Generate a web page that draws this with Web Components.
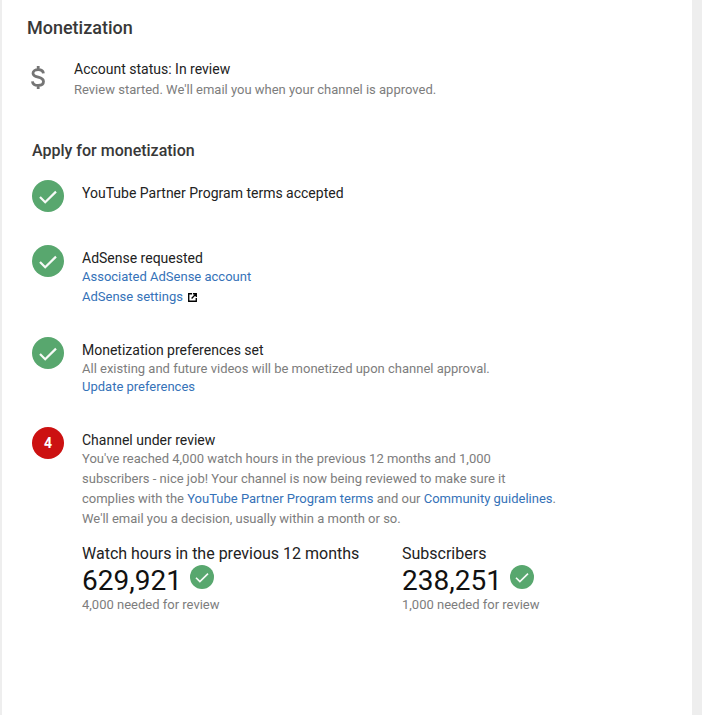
<!DOCTYPE html>
<html>
<head>
<meta charset="utf-8">
<style>
    html, body { margin: 0; padding: 0; background: #fff; }
    body { font-family: Roboto, "Liberation Sans", sans-serif; height: 715px; overflow: hidden; }
    .line { display: block; }
</style>
</head>
<body>
<template id="check-icon">
    <style>
        :host { display: inline-block; line-height: 0; }
        svg { width: 100%; height: 100%; display: block; }
    </style>
    <svg viewBox="0 0 32 32"><circle cx="16" cy="16" r="16" fill="#58a76e"/><path d="M8 17l5.200 5.200L24 11.600" fill="none" stroke="#f6faf7" stroke-width="2.200"/></svg>
</template>

<mon-page>
    <mon-status></mon-status>
    <apply-heading>Apply for monetization</apply-heading>
    <mon-step style="--step-height: 65px">
        YouTube Partner Program terms accepted
    </mon-step>
    <mon-step style="--step-height: 92px">
        AdSense requested
        <span slot="body"><a-link class="line">Associated AdSense account</a-link><span class="line"><a-link external>AdSense settings</a-link></span></span>
    </mon-step>
    <mon-step style="--step-height: 90px">
        Monetization preferences set
        <span slot="body"><grey-text class="line">All existing and future videos will be monetized upon channel approval.</grey-text><span class="line" style="margin-top: -2px"><a-link>Update preferences</a-link></span></span>
    </mon-step>
    <mon-step number="4">
        Channel under review
        <span slot="body"><grey-text>You've reached 4,000 watch hours in the previous 12 months and 1,000<br>subscribers - nice job! Your channel is now being reviewed to make sure it<br>complies with the <a-link>YouTube Partner Program terms</a-link> and our <a-link>Community guidelines</a-link>.<br>We'll email you a decision, usually within a month or so.</grey-text></span>
        <mon-stats slot="extra">
            <mon-stat label="Watch hours in the previous 12 months" value="629,921" need="4,000 needed for review" style="width: 320px"></mon-stat>
            <mon-stat label="Subscribers" value="238,251" need="1,000 needed for review"></mon-stat>
        </mon-stats>
    </mon-step>
</mon-page>

<script>
class CheckIcon extends HTMLElement {
    connectedCallback() {
        this.attachShadow({ mode: 'open' });
        this.shadowRoot.appendChild(document.getElementById('check-icon').content.cloneNode(true));
    }
}
customElements.define('check-icon', CheckIcon);

class GreyText extends HTMLElement {
    connectedCallback() {
        this.attachShadow({ mode: 'open' });
        this.shadowRoot.innerHTML = `<style>:host { color: #7d7d7d; }</style><slot></slot>`;
    }
}
customElements.define('grey-text', GreyText);

class ALink extends HTMLElement {
    connectedCallback() {
        this.attachShadow({ mode: 'open' });
        const ext = this.hasAttribute('external') ? `
            <svg viewBox="0 0 10 10"><path d="M4.500 .8H.8v8.400h8.400V5.500M5.500 .8h3.700v3.700M8.800 1.200L4 6" fill="none" stroke="#000" stroke-width="1.500"/></svg>` : '';
        this.shadowRoot.innerHTML = `
            <style>
                :host { color: #3572b8; }
                svg { width: 9px; height: 9px; margin-left: 2px; vertical-align: -1px; }
            </style>
            <slot></slot>${ext}`;
    }
}
customElements.define('a-link', ALink);

class MonPage extends HTMLElement {
    connectedCallback() {
        this.attachShadow({ mode: 'open' });
        this.shadowRoot.innerHTML = `
            <style>
                :host {
                    display: block;
                    width: 702px;
                    height: 715px;
                    box-sizing: border-box;
                    background: #fff;
                    border-left: 2px solid #eeeeee;
                    border-right: 10px solid #eeeeee;
                    padding: 18px 0 0 25px;
                    color: #212121;
                }
                h1 {
                    margin: 0;
                    font-size: 18px;
                    font-weight: 500;
                    line-height: 20px;
                    color: #383838;
                }
            </style>
            <h1>Monetization</h1>
            <slot></slot>`;
    }
}
customElements.define('mon-page', MonPage);

class MonStatus extends HTMLElement {
    connectedCallback() {
        this.attachShadow({ mode: 'open' });
        this.shadowRoot.innerHTML = `
            <style>
                :host { display: flex; margin-top: 21px; font-size: 14px; }
                .dollar { width: 47px; padding: 7px 0 0 4px; box-sizing: border-box; }
                svg { display: block; width: 14px; height: 23px; }
                .title { line-height: 20px; color: #222; }
                .sub { line-height: 20px; margin-top: 1px; color: #7d7d7d; font-size: 13px; }
            </style>
            <div class="dollar">
                <svg viewBox="0 0 14 23"><path d="M12.400 7.400C12.200 5 10.400 3.600 7.200 3.600 4.200 3.600 2 5 2 7.200c0 2.400 2.200 3.200 5.200 3.900 3 .8 5.300 1.700 5.300 4.400 0 2.400-2.200 3.900-5.400 3.900-3.200 0-5.400-1.500-5.700-4.100M7.200 0v4M7.200 19v4" fill="none" stroke="#757575" stroke-width="2.800"/></svg>
            </div>
            <div>
                <div class="title">Account status: In review</div>
                <div class="sub">Review started. We'll email you when your channel is approved.</div>
            </div>`;
    }
}
customElements.define('mon-status', MonStatus);

class ApplyHeading extends HTMLElement {
    connectedCallback() {
        this.attachShadow({ mode: 'open' });
        this.shadowRoot.innerHTML = `
            <style>
                :host {
                    display: block;
                    margin: 41px 0 19px 5px;
                    font-size: 16px;
                    font-weight: 500;
                    line-height: 20px;
                    color: #383838;
                }
            </style>
            <slot></slot>`;
    }
}
customElements.define('apply-heading', ApplyHeading);

class MonStep extends HTMLElement {
    connectedCallback() {
        this.attachShadow({ mode: 'open' });
        const num = this.getAttribute('number');
        const badge = num
            ? `<div class="num">${num}</div>`
            : `<check-icon class="badge"></check-icon>`;
        this.shadowRoot.innerHTML = `
            <style>
                :host {
                    display: flex;
                    margin-left: 5px;
                    height: var(--step-height, auto);
                }
                .badge, .num { width: 32px; height: 32px; flex: none; }
                .num {
                    border-radius: 50%;
                    background: #cc1111;
                    color: #fff;
                    font-size: 14px;
                    font-weight: 700;
                    line-height: 32px;
                    text-align: center;
                }
                .text { margin-left: 18px; padding-top: 3px; }
                .title { font-size: 14px; line-height: 20px; color: #222; }
                .body { font-size: 13px; line-height: 20px; margin-top: -1px; }
            </style>
            ${badge}
            <div class="text">
                <div class="title"><slot></slot></div>
                <div class="body"><slot name="body"></slot></div>
                <slot name="extra"></slot>
            </div>`;
    }
}
customElements.define('mon-step', MonStep);

class MonStats extends HTMLElement {
    connectedCallback() {
        this.attachShadow({ mode: 'open' });
        this.shadowRoot.innerHTML = `
            <style>:host { display: flex; margin-top: 15px; }</style>
            <slot></slot>`;
    }
}
customElements.define('mon-stats', MonStats);

class MonStat extends HTMLElement {
    connectedCallback() {
        this.attachShadow({ mode: 'open' });
        this.shadowRoot.innerHTML = `
            <style>
                :host { display: block; }
                .label { font-size: 16px; line-height: 20px; color: #222; }
                .value { display: flex; align-items: flex-start; font-size: 28px; line-height: 34px; color: #111; }
                check-icon { width: 24px; height: 24px; margin: 1px 0 0 8px; }
                .need { font-size: 13px; line-height: 15px; margin-top: -1px; color: #7d7d7d; }
            </style>
            <div class="label">${this.getAttribute('label')}</div>
            <div class="value">${this.getAttribute('value')}<check-icon></check-icon></div>
            <div class="need">${this.getAttribute('need')}</div>`;
    }
}
customElements.define('mon-stat', MonStat);
</script>
</body>
</html>
